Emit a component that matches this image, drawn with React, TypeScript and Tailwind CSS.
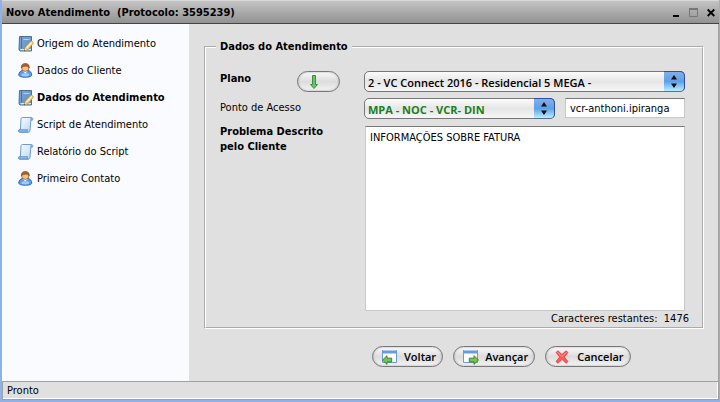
import type { ReactNode } from "react";

function NotePencilIcon() {
  return (
    <svg width="16" height="16" viewBox="0 0 16 16" aria-hidden="true">
      <defs>
        <linearGradient id="book" x1="0" y1="0" x2="1" y2="1">
          <stop offset="0" stopColor="#7fa6cf" />
          <stop offset="1" stopColor="#5c90c6" />
        </linearGradient>
      </defs>
      <path d="M1.500.500h12v14.500h-11.500l-1-1.500z" fill="url(#book)" stroke="#4c6f98" />
      <path d="M2.200 13h10.800v1.200H2.800z" fill="#dfe8f2" />
      <path d="M3.500 1v11.500" stroke="#46719f" />
      <path d="M5.500 3.500h6" stroke="#b5cfe8" />
      <path d="M6.300 15l1-3.800 5.500-5.900c.8-.8 3 1.200 2.400 2.100L9.900 13.900z" fill="#fbd07a" stroke="#c08a34" strokeWidth=".7" />
      <path d="M8.300 12.200l5.400-5.800" stroke="#fff3c4" strokeWidth="1.200" />
      <path d="M6.300 15l.9-3.400 2.400 2.200z" fill="#fae8c8" stroke="#a77c40" strokeWidth=".4" />
      <path d="M6 15.200l.5-1.500 1 1z" fill="#444" />
    </svg>
  );
}

function PersonIcon() {
  return (
    <svg width="16" height="16" viewBox="0 0 16 16" aria-hidden="true">
      <path d="M.8 12c0-2.300 1.300-4 3.700-4.500h5.500c2.400.500 3.700 2.200 3.700 4.500 0 1.500-2.700 2.200-6.400 2.200S.8 13.500.8 12z" fill="#5a9dec" stroke="#2f66b8" />
      <path d="M3.500 11.300c-.5 1.500.5 2.200 3.800 2.200s4.300-.7 3.800-2.200c-1-1.300-6.600-1.300-7.600 0z" fill="#98cdfd" />
      <path d="M5 8l2.300 2.500L9.600 8z" fill="#fff" />
      <ellipse cx="7.300" cy="4.900" rx="3.700" ry="3.500" fill="#f6bf8a" stroke="#8a4f20" strokeWidth=".7" />
      <path d="M3.400 5C2.900 1.900 4.700.400 7.300.400s4.400 1.500 3.900 4.600c-.6-1.400-1.500-1.800-3.200-1.800-2 .2-3.800.2-4.600 1.800z" fill="#a5622a" stroke="#74401a" strokeWidth=".5" />
    </svg>
  );
}

function ScrollIcon() {
  return (
    <svg width="16" height="16" viewBox="0 0 16 16" aria-hidden="true">
      <defs>
        <linearGradient id="paper" x1="0" y1="0" x2="1" y2="1">
          <stop offset="0" stopColor="#ffffff" />
          <stop offset="1" stopColor="#b3d4f4" />
        </linearGradient>
      </defs>
      <path d="M3 2c0-1 .5-1.500 1.400-1.500h8.800c1.200 0 1.600.7 1.600 1.600s-.5 1.400-1.200 1.400h-.8L12 13c-.1 1.500-.7 2.200-1.700 2.200H1.800C.8 15.200.4 14.500.4 13.800s.5-1.300 1.400-1.300h.6z" fill="url(#paper)" stroke="#6c9bcd" />
      <path d="M12.500 3.500c-.6-1-.3-2.500.7-2.800 1.100.1 1.500.7 1.400 1.500s-.5 1.300-1.200 1.300z" fill="#7aaadb" />
      <path d="M1.800 12.600h7.900c-.5.700-.3 2 .6 2.500H1.800c-1.600-.3-1.600-2.200 0-2.500z" fill="#86b5e5" stroke="#5688c0" strokeWidth=".6" />
    </svg>
  );
}

function WindowArrowIcon({ back = false }: { back?: boolean }) {
  return (
    <svg width="16" height="16" viewBox="0 0 16 16" aria-hidden="true">
      <path d="M.5 1.500h14v12H.5z" fill="#fdfeff" stroke="#6b9bd8" />
      <path d="M0 1h15v3.500H0z" fill="#6a9cdc" />
      <path d="M1 1.500h13" stroke="#a8c8ee" />
      {back ? (
        <path d="M.5 11L5 6.700v2.500h4.700v3.700H5v2.500z" fill="#7cc256" stroke="#3f8427" />
      ) : (
        <path d="M15.500 11L11 6.700v2.500H6.300v3.700H11v2.500z" fill="#7cc256" stroke="#3f8427" />
      )}
    </svg>
  );
}

function CrossIcon() {
  return (
    <svg width="16" height="14" viewBox="0 0 16 14" aria-hidden="true">
      <path d="M1 2.500L3 .8 7 4.500 11 .8l2 1.700L9.300 7l3.700 4.500-2 1.800-4-4-4 4-2-1.800L4.700 7z" fill="#fb5a58" stroke="#e53a3c" strokeWidth=".8" />
      <path d="M2.300 2.300L7 6.500l4.700-4.200" stroke="#ff9a95" fill="none" />
    </svg>
  );
}

const steps = [
  { label: "Origem do Atendimento", icon: <NotePencilIcon /> },
  { label: "Dados do Cliente", icon: <PersonIcon /> },
  { label: "Dados do Atendimento", icon: <NotePencilIcon />, current: true },
  { label: "Script de Atendimento", icon: <ScrollIcon /> },
  { label: "Relatório do Script", icon: <ScrollIcon /> },
  { label: "Primeiro Contato", icon: <PersonIcon /> },
];

const pill =
  "flex h-[21px] items-center rounded-full border border-[#777] bg-linear-to-b from-[#fbfbfb] via-[#dcdcdc] to-[#f4f4f4] shadow-[inset_0_0_2px_#999]";

function PillButton({ icon, children }: { icon: ReactNode; children: ReactNode }) {
  return (
    <button type="button" className={`${pill} gap-[6px] pr-[6px] pl-[9px] font-['Open_Sans',sans-serif] text-[11px] leading-4 font-semibold`}>
      {icon}
      {children}
    </button>
  );
}

function GlossySelect({ id, value, className }: { id: string; value: string; className: string }) {
  return (
    <div className="relative min-w-0 flex-1">
      <select
        id={id}
        className={`block h-[21px] w-full appearance-none rounded-[5px] border border-[#777] bg-linear-to-b from-[#fbfbfb] via-[#e6e6e6] to-[#f6f6f6] pt-[3px] pl-[3px] font-['Open_Sans',sans-serif] text-[11px] leading-4 ${className}`}
      >
        <option>{value}</option>
      </select>
      <span className="pointer-events-none absolute inset-y-0 right-0 flex w-[21px] items-center justify-center rounded-r-[5px] border border-l-0 border-[#2f4fa0] border-b-[#57718f] bg-linear-to-b from-[#83aee8] via-[#5e9fe8] to-[#b8f0ff]">
        <svg width="6" height="13" viewBox="0 0 6 13" aria-hidden="true">
          <path d="M3 0l3 4.500H0zM3 13l3-4.500H0z" fill="#111" />
        </svg>
      </span>
    </div>
  );
}

export default function App() {
  return (
    <div className="flex min-h-screen flex-col border-r border-b-2 border-l-2 border-[#8fb0ea] bg-[#e0e0e0] font-['DejaVu_Sans_Condensed','DejaVu_Sans',sans-serif] text-[11px] leading-[15px] text-black">
      <header className="flex h-6 items-center border-t border-b border-t-[#d8d8d8] border-b-[#444] bg-linear-to-b from-[#c4c4c4] to-[#929292] pr-1 pl-1">
        <h1 className="flex-1 font-bold whitespace-pre">{"Novo Atendimento  (Protocolo: 3595239)"}</h1>
        <div className="flex gap-[9px]">
          <button type="button" aria-label="Minimizar">
            <svg width="8" height="9" viewBox="0 0 8 9"><path d="M1 7h6v2H1z" /></svg>
          </button>
          <button type="button" aria-label="Maximizar">
            <svg width="9" height="9" viewBox="0 0 9 9"><path d="M.5 1h8v7.500h-8z" fill="none" stroke="#777" /><path d="M0 0h9v2H0z" fill="#777" /></svg>
          </button>
          <button type="button" aria-label="Fechar">
            <svg width="8" height="9" viewBox="0 0 8 9"><path d="M.7 1.500l6.600 6.500M7.300 1.500L.7 8" stroke="#000" strokeWidth="1.800" /></svg>
          </button>
        </div>
      </header>

      <div className="flex flex-1 border-r border-[#a0a0a0]">
        <nav className="w-[187px] shrink-0 bg-[#fafbff] pt-[6px] pl-4">
          <ul>
            {steps.map((step) => (
              <li key={step.label}>
                <a
                  href="#"
                  aria-current={step.current ? "step" : undefined}
                  className={`flex h-[27px] items-center gap-[3px] whitespace-nowrap ${step.current ? "font-bold" : ""}`}
                >
                  {step.icon}
                  {step.label}
                </a>
              </li>
            ))}
          </ul>
        </nav>

        <main className="min-w-0 flex-1 pt-[15px] pr-[14px] pl-[15px]">
          <form>
            <fieldset className="min-w-0 border-2 border-white pr-[17px] pl-[14px] [border-style:groove]">
              <legend className="-ml-1 px-1 leading-4 font-bold">Dados do Atendimento</legend>

              <div className="flex pt-4">
                <label htmlFor="plano" className="w-[77px] font-bold">Plano</label>
                <button type="button" aria-label="Carregar plano" className={`${pill} mr-6 w-[43px] pl-3`}>
                  <svg width="8" height="14" viewBox="0 0 8 14" aria-hidden="true">
                    <path d="M2.500.5h3v9h2L4 13.500.5 9.500h2z" fill="#6cc46a" stroke="#3c8f40" />
                  </svg>
                </button>
                <GlossySelect id="plano" value="2 - VC Connect 2016 - Residencial 5 MEGA -" className="font-semibold" />
              </div>

              <div className="mt-[6px] flex">
                <label htmlFor="ponto" className="w-36 pt-[2px]">Ponto de Acesso</label>
                <GlossySelect id="ponto" value="MPA - NOC - VCR- DIN" className="font-bold text-[#1b7f1b]" />
                <input
                  aria-label="Identificador do ponto de acesso"
                  defaultValue="vcr-anthoni.ipiranga"
                  className="ml-[10px] h-5 w-[120px] border border-[#c8c8c8] border-t-[#777] bg-white pl-1"
                />
              </div>

              <div className="mt-[5px] flex">
                <label htmlFor="problema" className="w-[145px] font-bold">
                  Problema Descrito
                  <br />
                  pelo Cliente
                </label>
                <textarea
                  id="problema"
                  defaultValue="INFORMAÇÕES SOBRE FATURA"
                  className="mt-[2px] h-[185px] min-w-0 flex-1 resize-none border border-[#c8c8c8] border-t-[#777] bg-white px-1 py-[3px]"
                />
              </div>
              <p className="-mr-1 text-right leading-4 whitespace-pre">{"Caracteres restantes:  1476"}</p>
            </fieldset>

            <div className="mt-[17px] flex gap-[10px] pl-[168px]">
              <PillButton icon={<WindowArrowIcon back />}>Voltar</PillButton>
              <PillButton icon={<WindowArrowIcon />}>Avançar</PillButton>
              <PillButton icon={<CrossIcon />}>Cancelar</PillButton>
            </div>
          </form>
        </main>
      </div>

      <footer className="h-[19px] border border-[#a0a0a0] pl-1 leading-[17px] shadow-[inset_-1px_-1px_0_#fff]">Pronto</footer>
    </div>
  );
}
